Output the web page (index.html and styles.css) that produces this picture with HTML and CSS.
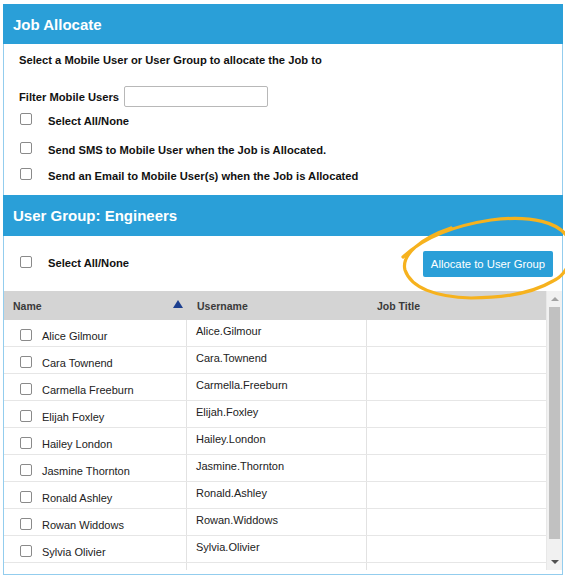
FILE: index.html
```html
<!DOCTYPE html>
<html>
<head>
<meta charset="utf-8">
<link rel="stylesheet" href="styles.css">
</head>
<body>
<div class="panel">
  <div class="bar">Job Allocate</div>
  <div class="intro">
    <div class="lead">Select a Mobile User or User Group to allocate the Job to</div>
    <div class="filter"><span>Filter Mobile Users</span><input class="filter-input" type="text"></div>
    <label class="opt opt-first"><span class="cb"></span><span>Select All/None</span></label>
    <label class="opt opt-sms"><span class="cb"></span><span>Send SMS to Mobile User when the Job is Allocated.</span></label>
    <label class="opt"><span class="cb"></span><span>Send an Email to Mobile User(s) when the Job is Allocated</span></label>
  </div>
  <div class="bar bar2">User Group: Engineers</div>
  <div class="toolbar">
    <label class="opt"><span class="cb"></span><span>Select All/None</span></label>
    <button class="allocate">Allocate to User Group</button>
  </div>
  <div class="grid-wrap">
    <div class="grid">
      <div class="grid-head">
        <div class="hcell hname">Name<span class="sort"></span></div>
        <div class="hcell">Username</div>
        <div class="hcell">Job Title</div>
      </div>
      <div class="grid-body">
        <div class="row"><div class="cell cname"><span class="rcb"></span>Alice Gilmour</div><div class="cell cuser">Alice.Gilmour</div><div class="cell"></div></div>
        <div class="row"><div class="cell cname"><span class="rcb"></span>Cara Townend</div><div class="cell cuser">Cara.Townend</div><div class="cell"></div></div>
        <div class="row"><div class="cell cname"><span class="rcb"></span>Carmella Freeburn</div><div class="cell cuser">Carmella.Freeburn</div><div class="cell"></div></div>
        <div class="row"><div class="cell cname"><span class="rcb"></span>Elijah Foxley</div><div class="cell cuser">Elijah.Foxley</div><div class="cell"></div></div>
        <div class="row"><div class="cell cname"><span class="rcb"></span>Hailey London</div><div class="cell cuser">Hailey.London</div><div class="cell"></div></div>
        <div class="row"><div class="cell cname"><span class="rcb"></span>Jasmine Thornton</div><div class="cell cuser">Jasmine.Thornton</div><div class="cell"></div></div>
        <div class="row"><div class="cell cname"><span class="rcb"></span>Ronald Ashley</div><div class="cell cuser">Ronald.Ashley</div><div class="cell"></div></div>
        <div class="row"><div class="cell cname"><span class="rcb"></span>Rowan Widdows</div><div class="cell cuser">Rowan.Widdows</div><div class="cell"></div></div>
        <div class="row"><div class="cell cname"><span class="rcb"></span>Sylvia Olivier</div><div class="cell cuser">Sylvia.Olivier</div><div class="cell"></div></div>
        <div class="row"><div class="cell cname"><span class="rcb"></span>Tony Collins</div><div class="cell cuser">Tony.Collins</div><div class="cell"></div></div>
      </div>
    </div>
    <div class="scrollbar">
      <div class="arrow up"></div>
      <div class="track"><div class="thumb"></div></div>
      <div class="arrow down"></div>
    </div>
  </div>
  <svg class="annot" width="565" height="577" viewBox="0 0 565 577">
    <path d="M 402 257 C 420 240, 450 226, 490 220 C 530 215, 560 222, 568 240 C 574 258, 565 275, 552 281 C 530 294, 500 298, 470 298 C 435 297, 410 288, 404 270 C 400 255, 420 238, 450 228" fill="none" stroke="#f6b21e" stroke-width="3.2" stroke-linecap="round"/>
  </svg>
</div>
</body>
</html>
```
FILE: styles.css
```css
html, body {
  margin: 0;
  padding: 0;
  background: #ffffff;
}
body {
  font-family: "Liberation Sans", Arial, sans-serif;
  color: #111;
}
.panel {
  position: relative;
  margin: 4px 2px 0 3px;
  height: 571px;
  box-sizing: border-box;
  border: 1px solid #93cdee;
  border-top: none;
  display: flex;
  flex-direction: column;
}
.bar {
  background: #2a9fd8;
  color: #fff;
  font-weight: bold;
  font-size: 15px;
  height: 40px;
  box-sizing: border-box;
  display: flex;
  align-items: center;
  margin: 0 -1px;
  padding-left: 10px;
}
.intro {
  padding: 10px 0 0 15px;
  height: 151px;
  box-sizing: border-box;
}
.lead {
  font-weight: bold;
  font-size: 11.2px;
  line-height: 13px;
}
.filter {
  margin-top: 19px;
  display: flex;
  align-items: center;
  font-weight: bold;
  font-size: 11.2px;
  gap: 5px;
}
.filter-input {
  width: 144px;
  height: 21px;
  box-sizing: border-box;
  border: 1px solid #b8b8b8;
  border-radius: 2px;
  margin: 0;
  padding: 0;
}
.opt {
  display: flex;
  align-items: flex-start;
  font-weight: bold;
  font-size: 11.2px;
  line-height: 13px;
  margin-top: 13px;
}
.opt-first { margin-top: 8px; }
.opt-sms { margin-top: 16px; }
.cb {
  width: 10px;
  height: 10px;
  border: 1px solid #8a8a8a;
  border-radius: 2px;
  margin: -2px 16px 0 1px;
  flex: none;
  background: #fff;
}
.bar2 { height: 41px; }
.toolbar {
  height: 55px;
  box-sizing: border-box;
  display: flex;
  align-items: center;
  justify-content: space-between;
  padding: 0 9px 0 15px;
}
.toolbar .opt { margin-top: 0; align-items: center; }
.toolbar .cb { margin-top: -4px; }
.allocate {
  background: #2a9fd8;
  color: #fff;
  border: none;
  border-radius: 2px;
  font-family: "Liberation Sans", Arial, sans-serif;
  font-size: 11.3px;
  height: 26px;
  width: 130px;
  padding: 0;
  margin-top: 0;
}
.grid-wrap {
  display: flex;
  height: 279px;
  overflow: hidden;
}
.grid {
  flex: 1;
  display: flex;
  flex-direction: column;
  min-width: 0;
}
.grid-head {
  display: grid;
  grid-template-columns: 183px 180px 1fr;
  background: #d4d4d4;
  height: 29px;
}
.hcell {
  font-weight: bold;
  font-size: 10.5px;
  color: #3a3a3a;
  padding: 9px 0 0 9px;
  position: relative;
}
.hcell + .hcell { padding-left: 10px; }
.sort {
  position: absolute;
  right: 4px;
  top: 9px;
  width: 0;
  height: 0;
  border-left: 5px solid transparent;
  border-right: 5px solid transparent;
  border-bottom: 8px solid #1c3f8f;
}
.grid-body {
  flex: 1;
  overflow: hidden;
}
.row {
  display: grid;
  grid-template-columns: 183px 180px 1fr;
  height: 27px;
  border-bottom: 1px solid #e6e6e6;
  box-sizing: border-box;
}
.cell {
  font-size: 11px;
  color: #222;
  border-right: 1px solid #e2e2e2;
}
.cell:last-child { border-right: none; }
.cname {
  display: flex;
  align-items: center;
  padding: 5px 0 0 16px;
}
.rcb {
  width: 10px;
  height: 10px;
  border: 1px solid #8a8a8a;
  border-radius: 2px;
  margin: -2px 10px 0 0;
  flex: none;
}
.cuser {
  padding: 5px 0 0 9px;
}
.scrollbar {
  width: 15px;
  flex: none;
  background: #f1f1f1;
  display: flex;
  flex-direction: column;
  border-left: 1px solid #e8e8e8;
}
.arrow {
  height: 16px;
  display: flex;
  align-items: center;
  justify-content: center;
}
.arrow.up::before {
  content: "";
  border-left: 4px solid transparent;
  border-right: 4px solid transparent;
  border-bottom: 4px solid #a3a3a3;
}
.arrow.down::before {
  content: "";
  border-left: 4px solid transparent;
  border-right: 4px solid transparent;
  border-top: 4px solid #505050;
}
.track {
  flex: 1;
  padding: 0 2px;
}
.thumb {
  height: 232px;
  background: #c1c1c1;
}
.annot {
  position: absolute;
  left: -3px;
  top: -4px;
  overflow: hidden;
  pointer-events: none;
}
```
